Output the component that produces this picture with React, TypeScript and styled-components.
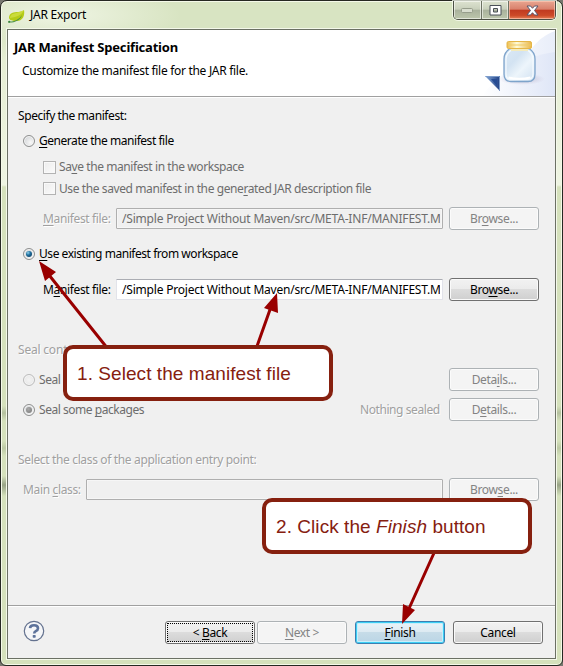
import React from "react";
import styled, { createGlobalStyle, css } from "styled-components";

const Global = createGlobalStyle`
  html, body { margin: 0; padding: 0; }
  body { background: #77776f; overflow: hidden; }
  * { box-sizing: border-box; }
`;

const Frame = styled.div`
  position: relative;
  width: 563px;
  height: 666px;
  padding: 27px 5px 5px 5px;
  border: 1px solid #262822;
  border-radius: 7px 7px 6px 6px;
  background:
    radial-gradient(ellipse 120px 30px at 60px 14px, rgba(246, 250, 238, 0.75), transparent),
    linear-gradient(180deg, #d8e4c2 0, #d8e4c2 28px, #e6eed4 60px, #eef4e2 184px, #d5e1bc 186px, #d5e1bc 405px, #b4c09e 412px, #d5e1bc 420px, #d5e1bc 440px, #bcc9a4 447px, #d5e1bc 455px, #d5e1bc 475px, #98a386 484px, #d5e1bc 495px);
  box-shadow: inset 0 0 0 1px #f5f9e9;
  font: 12px/16px "Noto Sans", "Open Sans", sans-serif;
  color: #000;
`;

const TitleBar = styled.div`
  position: absolute;
  top: 0;
  left: 0;
  right: 6px;
  height: 28px;
  display: flex;
  align-items: flex-start;
  padding-left: 7px;
  > svg { margin-top: 8px; }
`;

const TitleText = styled.span`
  margin: 6px auto 0 5px;
  letter-spacing: -0.25px;
`;

const Controls = styled.div`
  display: flex;
  width: 103px;
  height: 19px;
  border: 1px solid #4c5044;
  border-top: 0;
  border-radius: 0 0 5px 5px;
  box-shadow: 0 0 0 1px rgba(250, 253, 243, 0.75);
  overflow: hidden;
`;

const Control = styled.span<{ $w: number; $close?: boolean }>`
  display: flex;
  align-items: center;
  justify-content: center;
  width: ${(p) => p.$w}px;
  border-right: ${(p) => (p.$close ? 0 : "1px solid #6c7263")};
  box-shadow: inset 0 0 0 1px ${(p) => (p.$close ? "rgba(255,205,185,.65)" : "rgba(255,255,255,.55)")};
  background: ${(p) =>
    p.$close
      ? "linear-gradient(#e8a590 0, #d9806b 46%, #c03a20 50%, #cc4a28 80%, #e58258)"
      : "linear-gradient(#dde3d0 0, #c9d0bc 46%, #a9b19c 50%, #bdc7ac 100%)"};
`;

const Client = styled.div`
  display: flex;
  flex-direction: column;
  width: 549px;
  height: 630px;
  margin: 1px 0 0 1px;
  border: 1px solid #6b7064;
  box-shadow: 0 0 0 1px #f4f8ea;
  background: #f0f0f0;
`;

const Header = styled.header`
  display: flex;
  justify-content: space-between;
  flex: none;
  height: 67px;
  border-bottom: 1px solid #a0a0a0;
  background: #fff;
`;

const HeaderText = styled.div`
  padding: 9px 0 0 6px;
`;

const Heading = styled.div`
  font-size: 13px;
  font-weight: 700;
  letter-spacing: -0.2px;
`;

const Description = styled.div`
  padding: 8px 0 0 8px;
  letter-spacing: -0.3px;
`;

const Body = styled.main`
  flex: 1;
  border-top: 1px solid #fff;
  padding: 7px 16px 0 0;
`;

const Row = styled.div<{ $x: number; $gap?: number; $h?: number }>`
  display: flex;
  align-items: center;
  height: ${(p) => p.$h ?? 22}px;
  margin-top: ${(p) => p.$gap ?? 0}px;
  padding-left: ${(p) => p.$x}px;
`;

type Tone = "normal" | "gray" | "etched";

const Label = styled.span<{ $tone?: Tone; $ls?: number; $w?: number }>`
  flex: none;
  white-space: pre;
  width: ${(p) => (p.$w ? `${p.$w}px` : "auto")};
  letter-spacing: ${(p) => p.$ls ?? -0.42}px;
  ${(p) => p.$tone === "gray" && css`color: #6d6d6d;`}
  ${(p) =>
    p.$tone === "etched" &&
    css`
      color: #a0a0a0;
      text-shadow: 1px 1px 0 #fff;
    `}
  u { text-underline-offset: 2px; text-decoration-skip-ink: none; }
`;

const Radio = styled.span<{ $on?: boolean; $disabled?: boolean }>`
  flex: none;
  display: grid;
  place-items: center;
  width: 12px;
  height: 12px;
  margin-right: 4px;
  border: 1px solid ${(p) => (p.$disabled && !p.$on ? "#bcbcbc" : "#8e8f8f")};
  border-radius: 50%;
  background: radial-gradient(circle at 65% 65%, #f8f8f8, #cdd0d3 90%);
  box-shadow: inset 0 0 0 1px #f6f6f6;
  ${(p) => p.$disabled && !p.$on && css`background: radial-gradient(#f3f3f3, #e4e4e4);`}
  &::after {
    content: "";
    display: ${(p) => (p.$on ? "block" : "none")};
    width: 6px;
    height: 6px;
    border-radius: 50%;
    background: ${(p) =>
      p.$disabled
        ? "radial-gradient(circle at 40% 35%, #aaa, #777)"
        : "radial-gradient(circle at 35% 30%, #8fd2ee, #1f6f9e 40%, #0c2f50)"};
  }
`;

const Check = styled.span`
  flex: none;
  width: 13px;
  height: 13px;
  margin-right: 3px;
  border: 1px solid #b3b3b3;
  background: linear-gradient(135deg, #ececec, #fbfbfb);
  box-shadow: inset 0 0 0 1px #f9f9f9;
`;

const Field = styled.div<{ $disabled?: boolean }>`
  flex: 1;
  height: 21px;
  margin-right: 6px;
  padding: 2px 1px 0 5px;
  overflow: hidden;
  white-space: nowrap;
  letter-spacing: -0.2px;
  border-radius: 1px;
  ${(p) =>
    p.$disabled
      ? css`
          border: 1px solid #afafaf;
          background: #f0f0f0;
          color: #6d6d6d;
          box-shadow: inset 0 0 0 1px #f6f6f6;
        `
      : css`
          border: 1px solid #e2e3ea;
          border-top-color: #abadb3;
          background: #fff;
        `}
`;

const FieldClip = styled.div`
  overflow: hidden;
  width: 318px;
`;

const Button = styled.button<{ $kind?: "disabled" | "default" | "focused"; $ml?: string }>`
  flex: none;
  position: relative;
  width: 90px;
  height: 23px;
  margin: 0 0 0 ${(p) => p.$ml ?? "0"};
  padding: 1px 0 0;
  font: inherit;
  letter-spacing: -0.35px;
  border: 1px solid #707070;
  border-radius: 3px;
  color: #000;
  background: linear-gradient(#f2f2f2 0, #ebebeb 48%, #dcdcdc 50%, #cfcfcf 100%);
  box-shadow: inset 0 0 0 1px #fafafa;
  u { text-underline-offset: 2px; text-decoration-skip-ink: none; }
  ${(p) =>
    p.$kind === "disabled" &&
    css`
      border-color: #adb2b5;
      background: #f4f4f4;
      color: #838383;
      box-shadow: inset 0 0 0 1px #fbfbfb;
    `}
  ${(p) =>
    p.$kind === "default" &&
    css`
      border-color: #3c7fb1;
      background: linear-gradient(#eaf3f8 0, #dceaf2 48%, #c6dce8 50%, #bad5e5 100%);
      box-shadow: inset 0 0 0 1px #3ccff5, inset 0 0 0 2px #c8effb;
    `}
  ${(p) =>
    p.$kind === "focused" &&
    css`
      &::after {
        content: "";
        position: absolute;
        inset: 1px;
        border: 1px dotted #000;
      }
    `}
`;

const Footer = styled.footer`
  display: flex;
  flex: none;
  height: 53px;
  border-top: 1px solid #a0a0a0;
  box-shadow: inset 0 1px 0 #fff;
  padding: 15px 12px 0 15px;
  > svg { margin-top: -1px; }
`;

const Callout = styled.div<{ $x: number; $y: number }>`
  position: absolute;
  left: ${(p) => p.$x}px;
  top: ${(p) => p.$y}px;
  width: 270px;
  height: 56px;
  padding: 14px 0 0 10px;
  border: 4px solid #86200f;
  border-radius: 10px;
  background: #fff;
  color: #86200f;
  font: 19px/21px "Liberation Sans", Arial, sans-serif;
  letter-spacing: 0.06px;
  white-space: nowrap;
`;

const Overlay = styled.svg`
  position: absolute;
  left: -1px;
  top: -1px;
  pointer-events: none;
`;

const LeafIcon = () => (
  <svg width="17" height="14" viewBox="0 0 17 14">
    <path d="M1 9C1 3.500 6 3 10 3C13 3 15 2 16 1C17 6 15 12 9 12C5 12 2 12 1 9Z" fill="#b5cc18" />
    <path d="M2 8C4 3 9 5 16 1C14 6 9 8 2 9Z" fill="#cadb3b" />
    <path d="M0 12.500C5 13 11 11 14 6C12 12 6 14 0 13.500Z" fill="#4e9146" />
    <circle cx="1.300" cy="12.700" r="1" fill="#37823c" />
  </svg>
);

const JarBanner = () => (
  <svg width="76" height="66" viewBox="0 0 76 66">
    <defs>
      <linearGradient id="wash" x1="0" x2="1">
        <stop offset="0" stopColor="#fff" />
        <stop offset="1" stopColor="#dfe6f7" />
      </linearGradient>
      <linearGradient id="glass" x1="0" x2="1" y1="0" y2="1">
        <stop offset="0" stopColor="#dbe9f6" />
        <stop offset=".35" stopColor="#d3e3f2" />
        <stop offset=".6" stopColor="#edf5fb" />
        <stop offset="1" stopColor="#cfe0f1" />
      </linearGradient>
      <linearGradient id="lid" x1="0" x2="1">
        <stop offset="0" stopColor="#edbd4e" />
        <stop offset=".4" stopColor="#fffbd9" />
        <stop offset="1" stopColor="#e9b64a" />
      </linearGradient>
      <linearGradient id="tri" x1="0" x2="1">
        <stop offset="0" stopColor="#84a8d8" />
        <stop offset="1" stopColor="#1f3f83" />
      </linearGradient>
      <radialGradient id="shade">
        <stop offset="0" stopColor="#8f8fa8" stopOpacity=".6" />
        <stop offset="1" stopColor="#b7a9c8" stopOpacity="0" />
      </radialGradient>
    </defs>
    <path d="M76 1C58 8 52 19 46 30C30 38 14 53 3 66H76Z" fill="url(#wash)" opacity=".7" />
    <path d="M76 22C48 25 20 43 3 66H76Z" fill="url(#wash)" />
    <ellipse cx="43" cy="49" rx="23" ry="6" fill="url(#shade)" />
    <path d="M31 18.500H50C54 21 56 24 56 29V44Q56 51.500 49 51.500H32Q25 51.500 25 44V29C25 24 27 21 31 18.500Z" fill="url(#glass)" stroke="#7ea4cb" strokeWidth="1.300" />
    <path d="M32 20.500H49C53 23 54 26 54 30V44Q54 49 49 49.500H32Q27 49 27 44V30C27 26 28 23 32 20.500Z" fill="none" stroke="#f5fbff" strokeWidth="1.200" />
    <path d="M29.500 47.500Q40 50 51.500 47.500" stroke="#fff" strokeWidth="2" fill="none" />
    <path d="M32 20H49" stroke="#f4ebbd" strokeWidth="2" />
    <rect x="28" y="11.500" width="24.500" height="7" rx="1.500" fill="url(#lid)" stroke="#e5b647" />
    <path d="M29 15H52" stroke="#f0cb67" />
    <path d="M6 46H21V61Z" fill="url(#tri)" />
    <path d="M12 49H18V56Z" fill="#264c94" />
    <path d="M6.500 46.500H20.500V60.500" fill="none" stroke="#7d9cca" />
  </svg>
);

const HelpIcon = () => (
  <svg width="22" height="22" viewBox="0 0 22 22">
    <circle cx="11" cy="11" r="9.700" fill="#f5f6f8" stroke="#64728f" strokeWidth="1.200" />
    <path d="M7 8.200Q7.200 5.200 11 5.200Q15 5.200 15 8.200Q15 10 12.800 11.100Q11.200 12 11.200 13.600" fill="none" stroke="#5e739b" strokeWidth="2.600" />
    <rect x="9.700" y="15" width="3" height="2.800" rx=".7" fill="#5e739b" />
  </svg>
);

const PATH = "/Simple Project Without Maven/src/META-INF/MANIFEST.MF";

export default function App() {
  return (
    <>
      <Global />
      <Frame>
        <TitleBar>
          <LeafIcon />
          <TitleText>JAR Export</TitleText>
          <Controls>
            <Control $w={28}>
              <svg width="13" height="6"><rect x=".5" y="1.500" width="11" height="4" rx="1" fill="#d9decf" stroke="#969d8b" /></svg>
            </Control>
            <Control $w={27}>
              <svg width="13" height="11"><path d="M1 .5H12V10H1ZM4.500 3.500V7H8.500V3.500Z" fill="#fff" fillRule="evenodd" stroke="#4b5058" /></svg>
            </Control>
            <Control $w={46} $close>
              <svg width="13" height="11"><path d="M1 1H4.500L6.500 3.300L8.500 1H12L8.500 5.500L12 10H8.500L6.500 7.700L4.500 10H1L4.500 5.500Z" fill="#fff" stroke="#59566a" /></svg>
            </Control>
          </Controls>
        </TitleBar>
        <Client>
          <Header>
            <HeaderText>
              <Heading>JAR Manifest Specification</Heading>
              <Description>Customize the manifest file for the JAR file.</Description>
            </HeaderText>
            <JarBanner />
          </Header>
          <Body>
            <Row $x={10}><Label>Specify the manifest:</Label></Row>
            <Row $x={15} $gap={3}><Radio /><Label $ls={-0.46}><u>G</u>enerate the manifest file</Label></Row>
            <Row $x={35} $gap={4}><Check /><Label $tone="gray">Sa<u>v</u>e the manifest in the workspace</Label></Row>
            <Row $x={35} $h={21}><Check /><Label $tone="gray" $ls={-0.4}>Use the saved manifest in the gene<u>r</u>ated JAR description file</Label></Row>
            <Row $x={35} $gap={8} $h={23}>
              <Label $tone="etched" $w={73} $ls={-0.35}><u>M</u>anifest file:</Label>
              <Field $disabled><FieldClip>{PATH}</FieldClip></Field>
              <Button $kind="disabled">Br<u>o</u>wse...</Button>
            </Row>
            <Row $x={15} $gap={13}><Radio $on /><Label $ls={-0.45}><u>U</u>se existing manifest from workspace</Label></Row>
            <Row $x={35} $gap={13} $h={23}>
              <Label $w={73} $ls={-0.35}>M<u>a</u>nifest file:</Label>
              <Field><FieldClip>{PATH}</FieldClip></Field>
              <Button>Bro<u>w</u>se...</Button>
            </Row>
            <Row $x={10} $gap={38}><Label $tone="etched" $ls={-0.2}>Seal contents:</Label></Row>
            <Row $x={15} $gap={7} $h={23}>
              <Radio $disabled /><Label $tone="gray">Seal</Label>
              <Button $kind="disabled" $ml="auto">Deta<u>i</u>ls...</Button>
            </Row>
            <Row $x={15} $gap={7} $h={23}>
              <Radio $disabled $on /><Label $tone="gray" $w={321} $ls={-0.46}>Seal some <u>p</u>ackages</Label>
              <Label $tone="etched">Nothing sealed</Label>
              <Button $kind="disabled" $ml="auto">D<u>e</u>tails...</Button>
            </Row>
            <Row $x={10} $gap={28}><Label $tone="etched" $ls={-0.35}>Select the class of the application entry point:</Label></Row>
            <Row $x={15} $gap={7} $h={23}>
              <Label $tone="etched" $w={63} $ls={-0.35}>Main <u>c</u>lass:</Label>
              <Field $disabled />
              <Button $kind="disabled">Brow<u>s</u>e...</Button>
            </Row>
          </Body>
          <Footer>
            <HelpIcon />
            <Button $kind="focused" $ml="auto">&lt; <u>B</u>ack</Button>
            <Button $kind="disabled" $ml="2px"><u>N</u>ext &gt;</Button>
            <Button $kind="default" $ml="8px"><u>F</u>inish</Button>
            <Button $ml="8px">Cancel</Button>
          </Footer>
        </Client>
        <Overlay width="563" height="666">
          <g stroke="#990000" strokeWidth="3" fill="#990000">
            <path d="M108 349L49 275M256 349L272 304M434 553L407 613" />
            <path d="M39 261L56 272L45 281ZM277 293L278 313L264 308ZM402 624L403 604L415 610Z" stroke="none" />
          </g>
        </Overlay>
        <Callout $x={62} $y={344}>1. Select the manifest file</Callout>
        <Callout $x={261} $y={497}>2. Click the <i>Finish</i> button</Callout>
      </Frame>
    </>
  );
}
